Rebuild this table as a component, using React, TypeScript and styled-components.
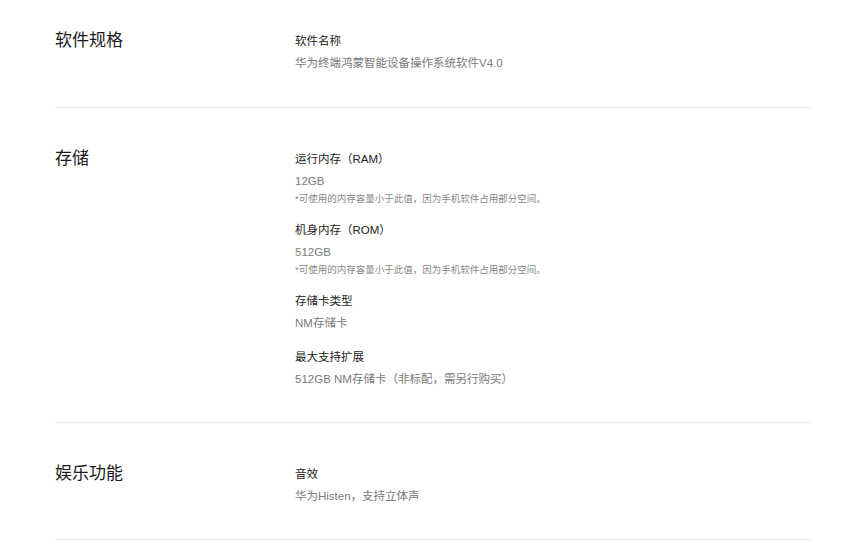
import styled, { createGlobalStyle } from 'styled-components';

interface ISpecItem {
  label: string;
  value: string;
  note?: string;
}

interface ISpecGroup {
  title: string;
  items: ISpecItem[];
}

const MEMORY_NOTE = '*可使用的内存容量小于此值，因为手机软件占用部分空间。';

const specGroups: ISpecGroup[] = [
  {
    title: '软件规格',
    items: [{ label: '软件名称', value: '华为终端鸿蒙智能设备操作系统软件V4.0' }],
  },
  {
    title: '存储',
    items: [
      { label: '运行内存（RAM）', value: '12GB', note: MEMORY_NOTE },
      { label: '机身内存（ROM）', value: '512GB', note: MEMORY_NOTE },
      { label: '存储卡类型', value: 'NM存储卡' },
      { label: '最大支持扩展', value: '512GB NM存储卡（非标配，需另行购买）' },
    ],
  },
  {
    title: '娱乐功能',
    items: [{ label: '音效', value: '华为Histen，支持立体声' }],
  },
];

const App = () => {
  return (
    <>
      <GlobalStyle />
      <SpecPage>
        {specGroups.map((group, idx) => (
          <SpecSection key={group.title} $first={idx === 0}>
            <SectionTitle>{group.title}</SectionTitle>
            <ItemList>
              {group.items.map(item => (
                <SpecItem key={item.label}>
                  <ItemLabel>{item.label}</ItemLabel>
                  <ItemValue>{item.value}</ItemValue>
                  {item.note && <ItemNote>{item.note}</ItemNote>}
                </SpecItem>
              ))}
            </ItemList>
          </SpecSection>
        ))}
      </SpecPage>
    </>
  );
};

const GlobalStyle = createGlobalStyle`
  body {
    margin: 0;
    background: #fff;
    font-family: "Liberation Sans", "Noto Sans CJK SC", sans-serif;
  }
`;

const SpecPage = styled.div`
  width: 756px;
  margin-left: 55px;
`;

const SpecSection = styled.section<{ $first?: boolean }>`
  display: flex;
  align-items: flex-start;
  padding: ${({ $first }) => ($first ? '31px 0 34px' : '41px 0 33px')};
  border-bottom: 1px solid #eeeeee;
`;

const SectionTitle = styled.h2`
  width: 240px;
  flex-shrink: 0;
  margin: 0;
  font-size: 17px;
  font-weight: normal;
  line-height: 20px;
  color: #1a1a1a;
`;

const ItemList = styled.div`
  display: flex;
  flex-direction: column;
  gap: 14px;
`;

const SpecItem = styled.div`
  display: flex;
  flex-direction: column;
`;

const ItemLabel = styled.div`
  font-size: 11.5px;
  line-height: 20px;
  color: #222;
  margin-bottom: 2px;
`;

const ItemValue = styled.div`
  font-size: 11.5px;
  line-height: 20px;
  color: #7a7a7a;
`;

const ItemNote = styled.div`
  font-size: 9.5px;
  line-height: 15px;
  color: #888;
`;

export default App;
